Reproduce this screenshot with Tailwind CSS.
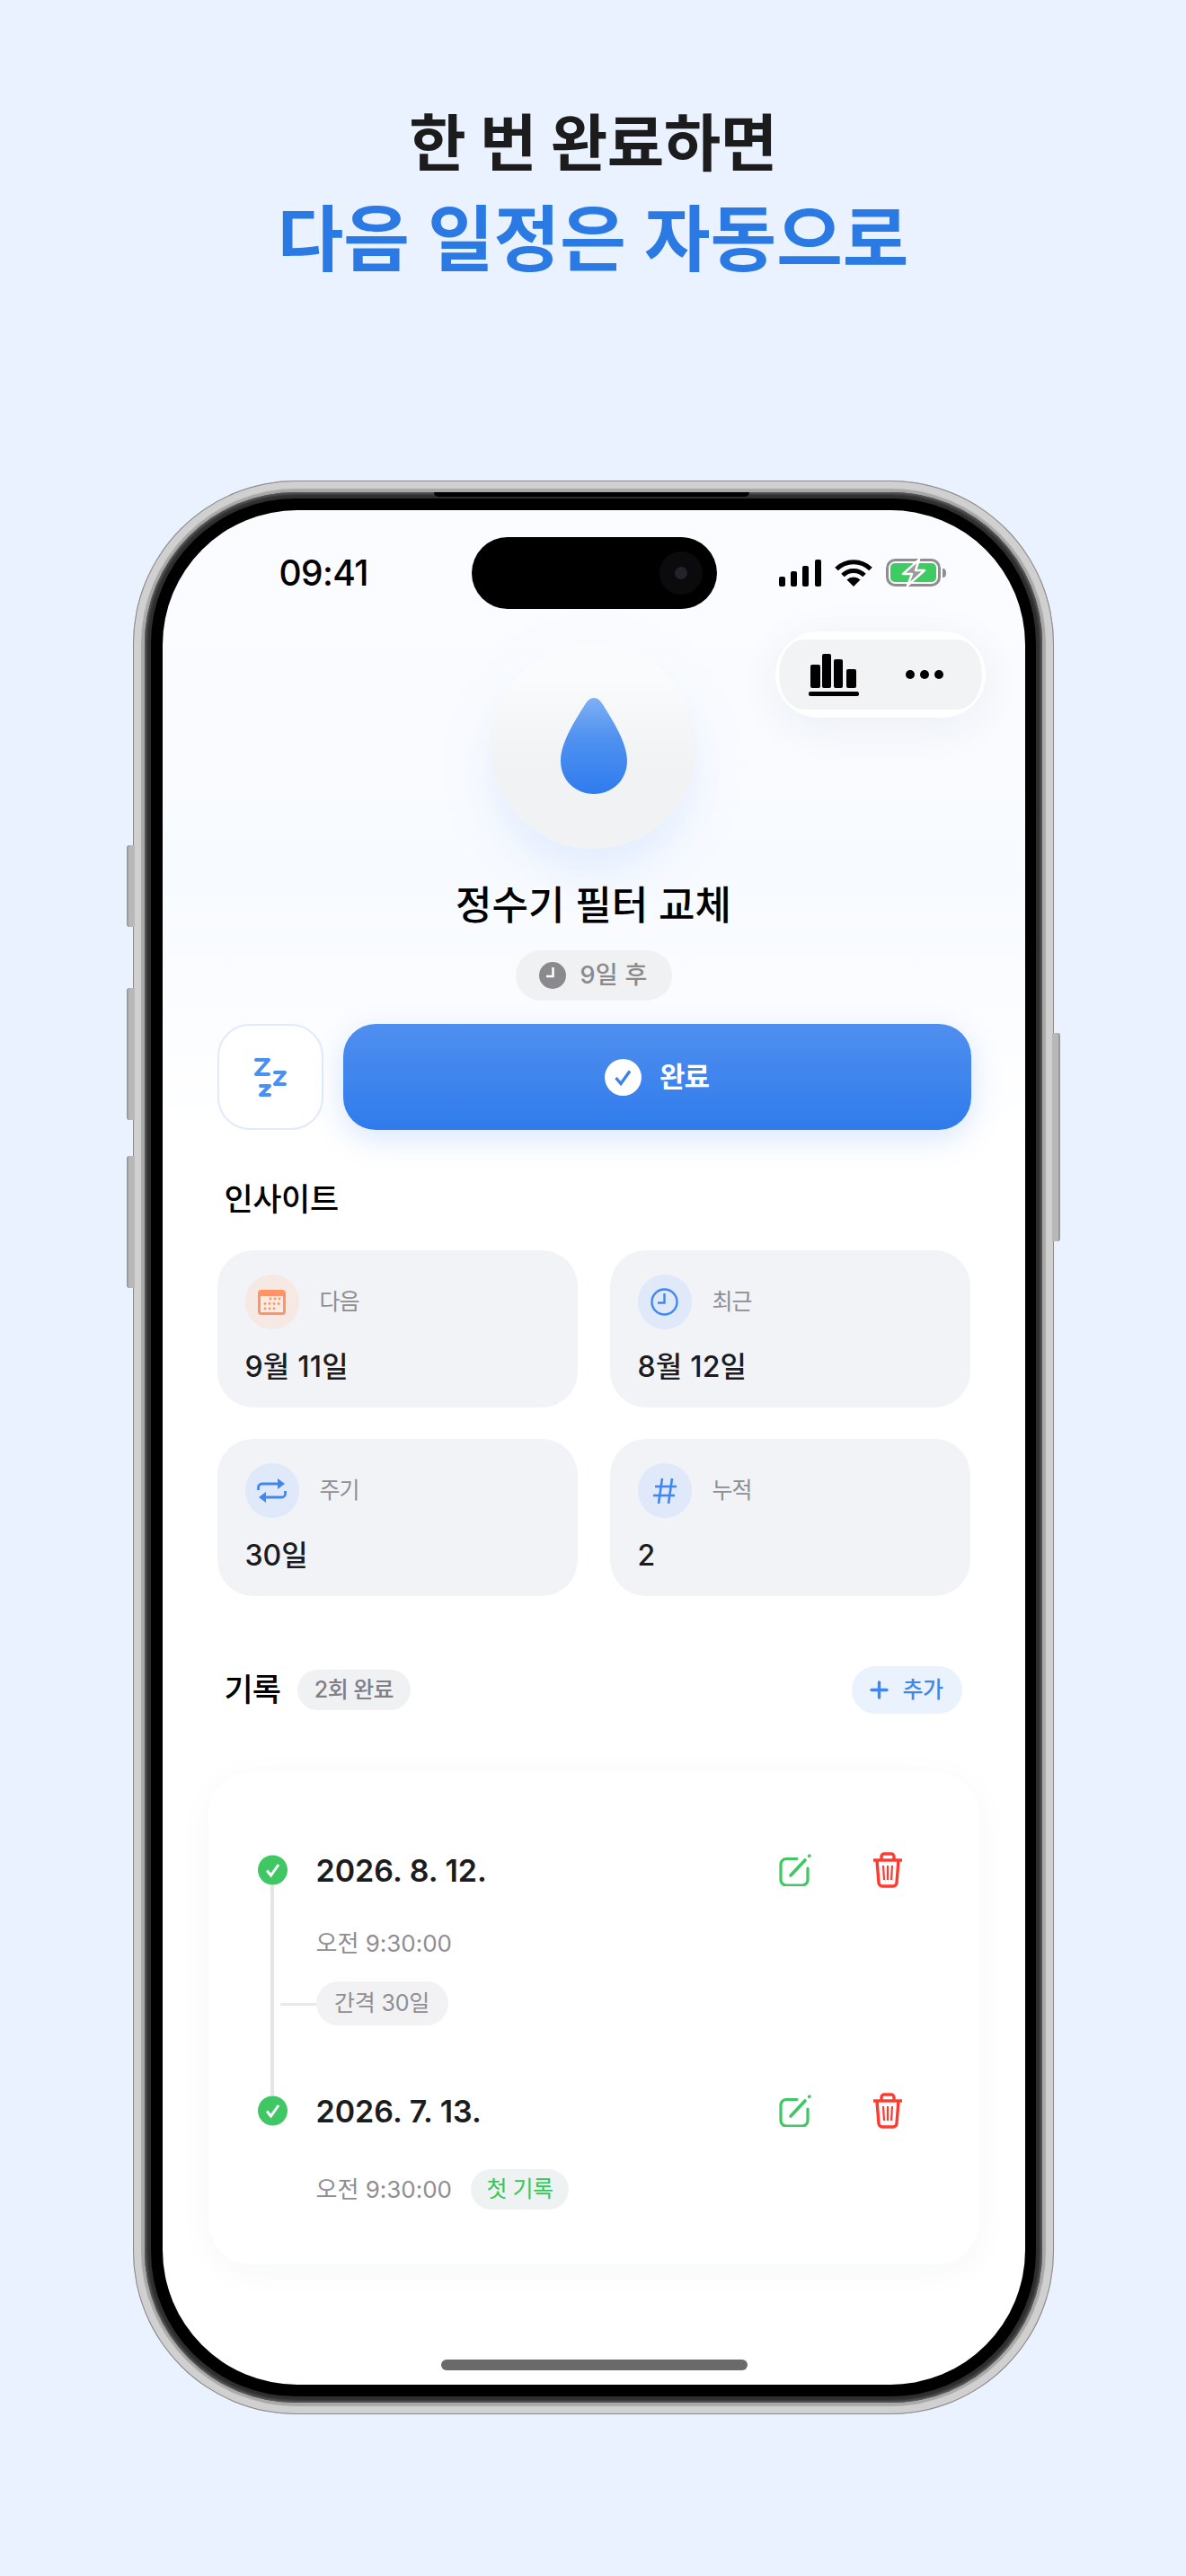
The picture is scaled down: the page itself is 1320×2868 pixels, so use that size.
<!DOCTYPE html>
<html lang="ko">
<head>
    <meta charset="UTF-8">
    <title>정수기 필터 교체</title>
    <script src="https://cdn.jsdelivr.net/npm/@tailwindcss/browser@4"></script>
</head>
<body class="w-[1320px] h-[2868px] overflow-hidden bg-[#eaf2ff] flex flex-col items-center font-['Inter','Noto_Sans_CJK_KR',sans-serif]">

    <!-- headline -->
    <h1 class="pt-[118px] text-[69px] leading-[84px] font-bold text-[#1c1c1c] tracking-[-0.5px]">한 번 완료하면</h1>
    <h2 class="mt-[16px] text-[80px] leading-[96px] font-semibold text-[#2b7ae4]">다음 일정은 자동으로</h2>

    <!-- phone -->
    <div class="relative mt-[221px] w-[1025px] h-[2153px] shrink-0 rounded-[182px] bg-[#a8a8a8] p-[13px] shadow-[inset_0_0_0_1px_#8a8a8a,inset_0_0_1px_9px_#d0d0d0]">
        <div class="absolute left-[-7px] top-[406px] w-[9px] h-[91px] rounded-l-[3px] bg-[#b8b8b8] border-l-2 border-[#9a9a9a]"></div>
        <div class="absolute left-[-7px] top-[565px] w-[9px] h-[147px] rounded-l-[3px] bg-[#b8b8b8] border-l-2 border-[#9a9a9a]"></div>
        <div class="absolute left-[-7px] top-[752px] w-[9px] h-[147px] rounded-l-[3px] bg-[#b8b8b8] border-l-2 border-[#9a9a9a]"></div>
        <div class="absolute right-[-7px] top-[615px] w-[9px] h-[232px] rounded-r-[3px] bg-[#b8b8b8] border-r-2 border-[#9a9a9a]"></div>

        <div class="relative w-full h-full rounded-[168px] bg-[#2e2e2e] p-[7px] shadow-[inset_0_0_3px_2px_#5c5c5c]">
            <div class="absolute left-[322px] top-0 w-[351px] h-[5px] rounded-b-[8px] bg-black shadow-[0_2px_0_#2c2c2c]"></div>
            <div class="w-full h-full rounded-[161px] bg-black p-[13px]">

                <!-- screen -->
                <div class="relative w-[960px] h-[2087px] overflow-hidden rounded-[150px] bg-gradient-to-b from-[#fbfcfe] from-0% via-[#f7faff] via-[20%] to-white to-[34%]">

                    <!-- dynamic island -->
                    <div class="absolute left-[344px] top-[30px] w-[273px] h-[80px] rounded-[40px] bg-black">
                        <div class="absolute right-[16px] top-[16px] w-[48px] h-[48px] rounded-full bg-[#0b0b0d]">
                            <div class="absolute left-[17px] top-[17px] w-[14px] h-[14px] rounded-full bg-[#23232b]"></div>
                        </div>
                    </div>

                    <!-- status bar -->
                    <div class="flex items-center justify-between pt-[50px] pl-[130px] pr-[86px] h-[148px] items-start">
                        <span class="text-[39px] leading-[40px] font-medium text-black tracking-[-0.6px]">09:41</span>
                        <div class="flex items-start gap-[15px] h-[40px]">
                            <svg class="mt-[5px]" width="47" height="30" viewBox="0 0 47 30" fill="#000">
                                <rect x="0" y="19" width="7" height="11" rx="2"/>
                                <rect x="13" y="13" width="7" height="17" rx="2"/>
                                <rect x="26" y="7" width="7" height="23" rx="2"/>
                                <rect x="40" y="0" width="7" height="30" rx="2"/>
                            </svg>
                            <svg class="mt-[5px]" width="42" height="30" viewBox="0 0 42 30" fill="none" stroke="#000" stroke-width="5">
                                <path d="M2 10.5A27 27 0 0 1 40 10.5"/>
                                <path d="M9 17.5A17 17 0 0 1 33 17.5"/>
                                <path d="M21 30L13.5 22.5A11 11 0 0 1 28.5 22.5Z" fill="#000" stroke="none"/>
                            </svg>
                            <svg class="mt-[4px]" width="69" height="32" viewBox="0 0 69 32" fill="none">
                                <rect x="1.5" y="1.5" width="58" height="28" rx="9" stroke="#8e8e8e" stroke-width="3"/>
                                <rect x="5" y="5" width="51" height="21" rx="5" fill="#3ecb62"/>
                                <path d="M63 11c3 0 4 2 4 5s-1 5-4 5z" fill="#8e8e8e"/>
                                <path d="M37 1L19 17H29L24 30L43 13H33Z" fill="#9a9a9a" stroke="#fff" stroke-width="2.5" stroke-linejoin="round"/>
                            </svg>
                        </div>
                    </div>

                    <!-- floating toolbar -->
                    <div class="absolute left-[682px] top-[135px] w-[234px] h-[96px] rounded-[48px] bg-white/90 px-[4px] py-[9px] shadow-[0_10px_50px_rgba(30,50,90,0.06)]">
                        <div class="w-full h-full rounded-[28px/40px] bg-[#f2f3f4] flex items-center pl-[33px] gap-[52px]">
                            <svg width="56" height="47" viewBox="0 0 56 47" fill="#000">
                                <rect x="2" y="12" width="11" height="26" rx="2"/>
                                <rect x="15" y="0" width="10" height="38" rx="2"/>
                                <rect x="28" y="6" width="10" height="32" rx="2"/>
                                <rect x="42" y="17" width="11" height="21" rx="2"/>
                                <rect x="0" y="42" width="56" height="5" rx="2"/>
                            </svg>
                            <svg width="42" height="10" viewBox="0 0 42 10" fill="#000">
                                <circle cx="5" cy="5" r="5"/><circle cx="21" cy="5" r="5"/><circle cx="37" cy="5" r="5"/>
                            </svg>
                        </div>
                    </div>

                    <!-- drop -->
                    <div class="mx-auto w-[229px] h-[229px] rounded-full bg-gradient-to-b from-[#fafbfd] from-[14%] to-[#f0f2f3] to-[60%] shadow-[0_28px_40px_-6px_rgba(70,130,250,0.09),0_20px_110px_rgba(70,130,250,0.03)] flex items-center justify-center">
                        <svg width="74" height="107" viewBox="0 0 74 107">
                            <defs>
                                <linearGradient id="drop" x1="0" y1="0" x2="0" y2="1">
                                    <stop offset="0" stop-color="#7fb0f5"/>
                                    <stop offset="0.42" stop-color="#4f91f0"/>
                                    <stop offset="1" stop-color="#2f7cef"/>
                                </linearGradient>
                            </defs>
                            <path d="M37 0C41 0 44 3 46 6C54 19 74 48 74 70C74 92 57 107 37 107C17 107 0 92 0 70C0 48 20 19 28 6C30 3 33 0 37 0Z" fill="url(#drop)"/>
                        </svg>
                    </div>

                    <!-- title -->
                    <h3 class="mt-[33px] text-center text-[44px] leading-[60px] font-medium text-black">정수기 필터 교체</h3>
                    <div class="mt-[20px] mx-auto w-[174px] h-[56px] rounded-full bg-[#f0f1f2] flex items-center justify-center gap-[15px]">
                        <svg width="30" height="30" viewBox="0 0 30 30">
                            <circle cx="15" cy="15" r="15" fill="#8a8a8e"/>
                            <path d="M15.5 6V16H8" fill="none" stroke="#fff" stroke-width="2.5"/>
                        </svg>
                        <span class="text-[27px] font-medium text-[#8a8a8e] tracking-[0.3px]">9일 후</span>
                    </div>

                    <!-- actions -->
                    <div class="mt-[26px] flex gap-[22px] pl-[61px] pr-[60px]">
                        <div class="w-[118px] h-[118px] rounded-[36px] border-2 border-[#e0eafa] bg-white flex items-center justify-center">
                            <svg width="36" height="43" viewBox="0 0 36 43" fill="none" stroke="#4a90f0" stroke-width="4" stroke-linejoin="round" stroke-linecap="round">
                                <path d="M2 2H16L2 18H16"/>
                                <path d="M23 16H34L23 29H34"/>
                                <path d="M7 31H17L7 41H17"/>
                            </svg>
                        </div>
                        <div class="flex-1 h-[118px] rounded-[36px] bg-gradient-to-b from-[#4f8fef] to-[#2f7bec] shadow-[0_10px_34px_rgba(50,120,240,0.18)] flex items-center justify-center gap-[20px]">
                            <svg width="41" height="41" viewBox="0 0 41 41">
                                <circle cx="20.5" cy="20.5" r="20.5" fill="#fff"/>
                                <path d="M12.5 21L18 27.5L28 13.5" fill="none" stroke="#3b82ee" stroke-width="3.4"/>
                            </svg>
                            <span class="text-[31px] font-semibold text-white tracking-[-1px]">완료</span>
                        </div>
                    </div>

                    <!-- insights -->
                    <h4 class="mt-[52px] pl-[69px] text-[35px] leading-[50px] font-medium text-black tracking-[-0.4px]">인사이트</h4>
                    <div class="mt-[32px] grid grid-cols-2 gap-x-[36px] gap-y-[35px] pl-[61px] pr-[61px]">
                        <div class="h-[175px] rounded-[40px] bg-[#f2f3f7] pl-[31px] pt-[27px]">
                            <div class="flex items-center gap-[23px]">
                                <div class="w-[60px] h-[61px] rounded-full bg-[#f6e9e3] flex items-center justify-center">
                                    <svg width="31" height="28" viewBox="0 0 31 28">
                                        <rect width="31" height="28" rx="4" fill="#ff9566"/>
                                        <rect x="3" y="7" width="25" height="18" fill="#f7ebe4"/>
                                        <g fill="#ff9566">
                                            <circle cx="14" cy="10" r="1.4"/><circle cx="19" cy="10" r="1.4"/><circle cx="24" cy="10" r="1.4"/>
                                            <circle cx="8" cy="15.5" r="1.4"/><circle cx="13" cy="15.5" r="1.4"/><circle cx="18" cy="15.5" r="1.4"/><circle cx="23" cy="15.5" r="1.4"/>
                                            <circle cx="8" cy="21" r="1.4"/><circle cx="13" cy="21" r="1.4"/><circle cx="18" cy="21" r="1.4"/>
                                        </g>
                                    </svg>
                                </div>
                                <span class="text-[25px] text-[#8e8e93] tracking-[-1px]">다음</span>
                            </div>
                            <p class="mt-[20px] text-[32px] leading-[44px] font-medium text-[#1c1c1e] tracking-[0.2px]">9월 11일</p>
                        </div>
                        <div class="h-[175px] rounded-[40px] bg-[#f2f3f7] pl-[31px] pt-[27px]">
                            <div class="flex items-center gap-[23px]">
                                <div class="w-[60px] h-[61px] rounded-full bg-[#e0e9f9] flex items-center justify-center">
                                    <svg width="31" height="31" viewBox="0 0 31 31" fill="none" stroke="#4088f0" stroke-width="2.4">
                                        <circle cx="15.5" cy="15.5" r="14"/>
                                        <path d="M15.5 6V16.5H8"/>
                                    </svg>
                                </div>
                                <span class="text-[25px] text-[#8e8e93] tracking-[-1px]">최근</span>
                            </div>
                            <p class="mt-[20px] text-[32px] leading-[44px] font-medium text-[#1c1c1e] tracking-[0.2px]">8월 12일</p>
                        </div>
                        <div class="h-[175px] rounded-[40px] bg-[#f2f3f7] pl-[31px] pt-[27px]">
                            <div class="flex items-center gap-[23px]">
                                <div class="w-[60px] h-[61px] rounded-full bg-[#e0e9f9] flex items-center justify-center">
                                    <svg width="33" height="27" viewBox="0 0 33 27" fill="none" stroke="#4088f0" stroke-width="2.8">
                                        <path d="M1.5 13V10a4 4 0 0 1 4-4H27"/>
                                        <path d="M23 0L31 6L23 12Z" fill="#4088f0" stroke="none"/>
                                        <path d="M31.5 14V17a4 4 0 0 1 -4 4H6"/>
                                        <path d="M10 15L2 21L10 27Z" fill="#4088f0" stroke="none"/>
                                    </svg>
                                </div>
                                <span class="text-[25px] text-[#8e8e93] tracking-[-1px]">주기</span>
                            </div>
                            <p class="mt-[20px] text-[32px] leading-[44px] font-medium text-[#1c1c1e]">30일</p>
                        </div>
                        <div class="h-[175px] rounded-[40px] bg-[#f2f3f7] pl-[31px] pt-[27px]">
                            <div class="flex items-center gap-[23px]">
                                <div class="w-[60px] h-[61px] rounded-full bg-[#e0e9f9] flex items-center justify-center">
                                    <svg width="26" height="30" viewBox="0 0 26 30" fill="none" stroke="#4088f0" stroke-width="2.6">
                                        <path d="M10 1L6 29"/>
                                        <path d="M21 1L17 29"/>
                                        <path d="M2 10H26"/>
                                        <path d="M0 20H24"/>
                                    </svg>
                                </div>
                                <span class="text-[25px] text-[#8e8e93] tracking-[-1px]">누적</span>
                            </div>
                            <p class="mt-[20px] text-[32px] leading-[44px] font-medium text-[#1c1c1e]">2</p>
                        </div>
                    </div>

                    <!-- history header -->
                    <div class="mt-[78px] flex items-center justify-between pl-[69px] pr-[70px] h-[53px]">
                        <div class="flex items-center gap-[19px]">
                            <span class="text-[35px] font-medium text-black tracking-[-1px]">기록</span>
                            <span class="w-[126px] h-[45px] rounded-full bg-[#f0f1f2] flex items-center justify-center text-[25px] font-medium text-[#808084] tracking-[-0.6px]">2회 완료</span>
                        </div>
                        <div class="w-[123px] h-[53px] rounded-full bg-[#eaf2fe] flex items-center justify-center gap-[15px]">
                            <svg width="21" height="21" viewBox="0 0 21 21" stroke="#3f87f0" stroke-width="3.4" stroke-linecap="round">
                                <path d="M10.5 2V19M2 10.5H19"/>
                            </svg>
                            <span class="text-[25px] font-medium text-[#3f87f0] tracking-[-0.5px]">추가</span>
                        </div>
                    </div>

                    <!-- history card -->
                    <div class="relative mt-[65px] mx-[51px] h-[548px] rounded-[48px] bg-white shadow-[0_8px_40px_rgba(40,70,120,0.035)] pl-[55px] pr-[85px] pt-[89px]">
                        <div class="absolute left-[69px] top-[126px] w-[4px] h-[234px] bg-[#e5e5e7]"></div>

                        <div class="flex items-center h-[40px]">
                            <svg class="mr-[32px]" width="33" height="34" viewBox="0 0 33 34">
                                <circle cx="16.5" cy="17" r="16.5" fill="#3ec763"/>
                                <path d="M10 17.5L14.5 23L23 11" fill="none" stroke="#fff" stroke-width="3"/>
                            </svg>
                            <span class="text-[34px] font-semibold text-[#1c1c1e]">2026. 8. 12.</span>
                            <svg class="ml-auto" width="36" height="36" viewBox="0 0 36 36" fill="none" stroke="#3ec763" stroke-width="3.2" stroke-linecap="round">
                                <path d="M20 5.5H8a6 6 0 0 0 -6 6V29a6 6 0 0 0 6 6H26a6 6 0 0 0 6-6V16"/>
                                <path d="M13 24L29 7" stroke-width="3.6"/>
                                <path d="M33.5 2.5L34 2"/>
                            </svg>
                            <svg class="ml-[68px]" width="34" height="40" viewBox="0 0 34 40" fill="none" stroke="#ff3b30" stroke-width="3.4">
                                <path d="M10 8V5a3 3 0 0 1 3-3h8a3 3 0 0 1 3 3V8"/>
                                <path d="M1 9H33"/>
                                <path d="M5 9L7 34a4 4 0 0 0 4 4H23a4 4 0 0 0 4-4L29 9"/>
                                <path d="M12 15L13 31M17 15V31M22 15L21 31" stroke-width="2.2"/>
                            </svg>
                        </div>
                        <p class="mt-[44px] ml-[65px] text-[26px] leading-[36px] text-[#8e8e93]">오전 9:30:00</p>
                        <div class="relative mt-[24px] ml-[65px] w-[147px] h-[49px] rounded-full bg-[#f2f2f5] flex items-center justify-center text-[25px] text-[#8e8e93] tracking-[-0.2px]">
                            간격 30일
                            <div class="absolute left-[-40px] top-[24px] w-[40px] h-[3px] bg-[#e8e8ea]"></div>
                        </div>

                        <div class="mt-[75px] flex items-center h-[40px]">
                            <svg class="mr-[32px]" width="33" height="34" viewBox="0 0 33 34">
                                <circle cx="16.5" cy="17" r="16.5" fill="#3ec763"/>
                                <path d="M10 17.5L14.5 23L23 11" fill="none" stroke="#fff" stroke-width="3"/>
                            </svg>
                            <span class="text-[34px] font-semibold text-[#1c1c1e]">2026. 7. 13.</span>
                            <svg class="ml-auto" width="36" height="36" viewBox="0 0 36 36" fill="none" stroke="#3ec763" stroke-width="3.2" stroke-linecap="round">
                                <path d="M20 5.5H8a6 6 0 0 0 -6 6V29a6 6 0 0 0 6 6H26a6 6 0 0 0 6-6V16"/>
                                <path d="M13 24L29 7" stroke-width="3.6"/>
                                <path d="M33.5 2.5L34 2"/>
                            </svg>
                            <svg class="ml-[68px]" width="34" height="40" viewBox="0 0 34 40" fill="none" stroke="#ff3b30" stroke-width="3.4">
                                <path d="M10 8V5a3 3 0 0 1 3-3h8a3 3 0 0 1 3 3V8"/>
                                <path d="M1 9H33"/>
                                <path d="M5 9L7 34a4 4 0 0 0 4 4H23a4 4 0 0 0 4-4L29 9"/>
                                <path d="M12 15L13 31M17 15V31M22 15L21 31" stroke-width="2.2"/>
                            </svg>
                        </div>
                        <div class="mt-[45px] ml-[65px] flex items-center gap-[21px]">
                            <span class="text-[26px] leading-[36px] text-[#8e8e93]">오전 9:30:00</span>
                            <span class="w-[109px] h-[45px] rounded-full bg-[#eff2f3] flex items-center justify-center text-[25px] text-[#34c759] tracking-[-0.5px]">첫 기록</span>
                        </div>
                    </div>

                    <!-- home indicator -->
                    <div class="absolute left-[310px] bottom-[16px] w-[341px] h-[12px] rounded-full bg-[#6a6a6a]"></div>
                </div>
            </div>
        </div>
    </div>

</body>
</html>
